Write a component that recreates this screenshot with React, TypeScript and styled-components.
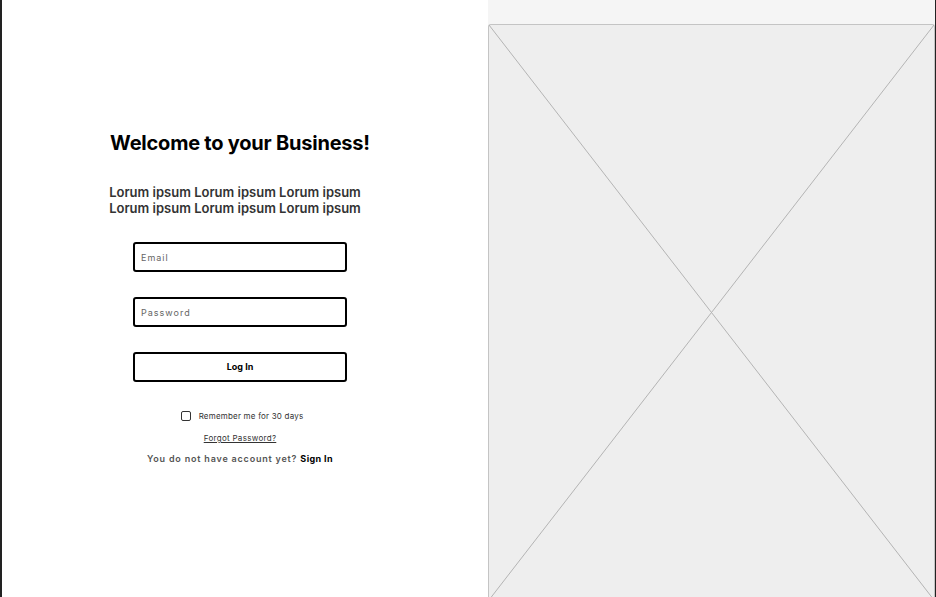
import styled, { createGlobalStyle } from "styled-components";

const Global = createGlobalStyle`
  html, body {
    margin: 0;
    padding: 0;
    background: #fff;
    font-family: Inter, "Liberation Sans", sans-serif;
  }
  * { box-sizing: border-box; }
`;

const App = () => {
  return (
    <Page>
      <Global />
      <FormSide>
        <Title>Welcome to your Business!</Title>
        <Intro>
          Lorum ipsum Lorum ipsum Lorum ipsum
          <br />
          Lorum ipsum Lorum ipsum Lorum ipsum
        </Intro>
        <Field placeholder="Email" />
        <Field placeholder="Password" type="password" />
        <LoginButton>Log In</LoginButton>
        <Remember>
          <Box type="checkbox" />
          Remember me for 30 days
        </Remember>
        <Forgot href="#">Forgot Password?</Forgot>
        <SignUp>
          You do not have account yet? <strong>Sign In</strong>
        </SignUp>
      </FormSide>
      <ImageSide>
        <Placeholder>
          <svg width="100%" height="100%" preserveAspectRatio="none" viewBox="0 0 100 100">
            <line x1="0" y1="0" x2="100" y2="100" stroke="#b4b4b4" strokeWidth="1" vectorEffect="non-scaling-stroke" />
            <line x1="100" y1="0" x2="0" y2="100" stroke="#b4b4b4" strokeWidth="1" vectorEffect="non-scaling-stroke" />
          </svg>
        </Placeholder>
      </ImageSide>
    </Page>
  );
};

const Page = styled.div`
  display: flex;
  width: 936px;
  height: 597px;
  overflow: hidden;
  border-left: 2px solid #222;
  border-right: 1px solid #222;
`;

const FormSide = styled.div`
  width: 486px;
  flex-shrink: 0;
  display: flex;
  flex-direction: column;
  align-items: center;
  padding: 131px 10px 0 0;
  background: #fff;
`;

const Title = styled.h1`
  margin: 0;
  font-size: 20px;
  font-weight: 700;
  color: #000;
  letter-spacing: -0.22px;
  line-height: 24px;
`;

const Intro = styled.p`
  margin: 29px 10px 26px 0;
  font-size: 13px;
  font-weight: 600;
  line-height: 16px;
  color: #333;
  text-align: left;
`;

const Field = styled.input`
  width: 214px;
  height: 30px;
  border: 2px solid #000;
  border-radius: 3px;
  padding: 0 6px;
  margin-bottom: 25px;
  font-family: Inter, "Liberation Sans", sans-serif;
  font-size: 9px;
  letter-spacing: 1px;
  outline: none;
  &::placeholder {
    color: #666;
  }
`;

const LoginButton = styled.button`
  width: 214px;
  height: 30px;
  border: 2px solid #000;
  border-radius: 3px;
  background: #fff;
  font-family: Inter, "Liberation Sans", sans-serif;
  font-size: 9px;
  font-weight: 700;
  color: #000;
  padding: 0 0 1px;
  margin-bottom: 29px;
`;

const Remember = styled.label`
  display: flex;
  align-items: center;
  gap: 8px;
  font-size: 8px;
  letter-spacing: 0.2px;
  color: #333;
  margin: 0 0 12px 4px;
`;

const Box = styled.input`
  appearance: none;
  width: 10px;
  height: 10px;
  margin: 0;
  border: 1.5px solid #333;
  border-radius: 2px;
  background: #fff;
`;

const Forgot = styled.a`
  font-size: 8px;
  letter-spacing: 0.3px;
  color: #333;
  text-decoration: underline;
  margin-bottom: 10px;
`;

const SignUp = styled.div`
  font-size: 9px;
  font-weight: 600;
  letter-spacing: 0.8px;
  color: #555;
  strong {
    color: #000;
    font-weight: 700;
    letter-spacing: 0.4px;
  }
`;

const ImageSide = styled.div`
  flex: 1;
  background: #f5f5f5;
  padding-top: 24px;
  display: flex;
  align-items: flex-start;
`;

const Placeholder = styled.div`
  flex: 1;
  background: #eeeeee;
  border: 1px solid #c4c4c4;
  border-bottom: none;
  border-radius: 3px 3px 0 0;
  height: 576px;
  flex-shrink: 0;
  svg {
    display: block;
  }
`;

export default App;
